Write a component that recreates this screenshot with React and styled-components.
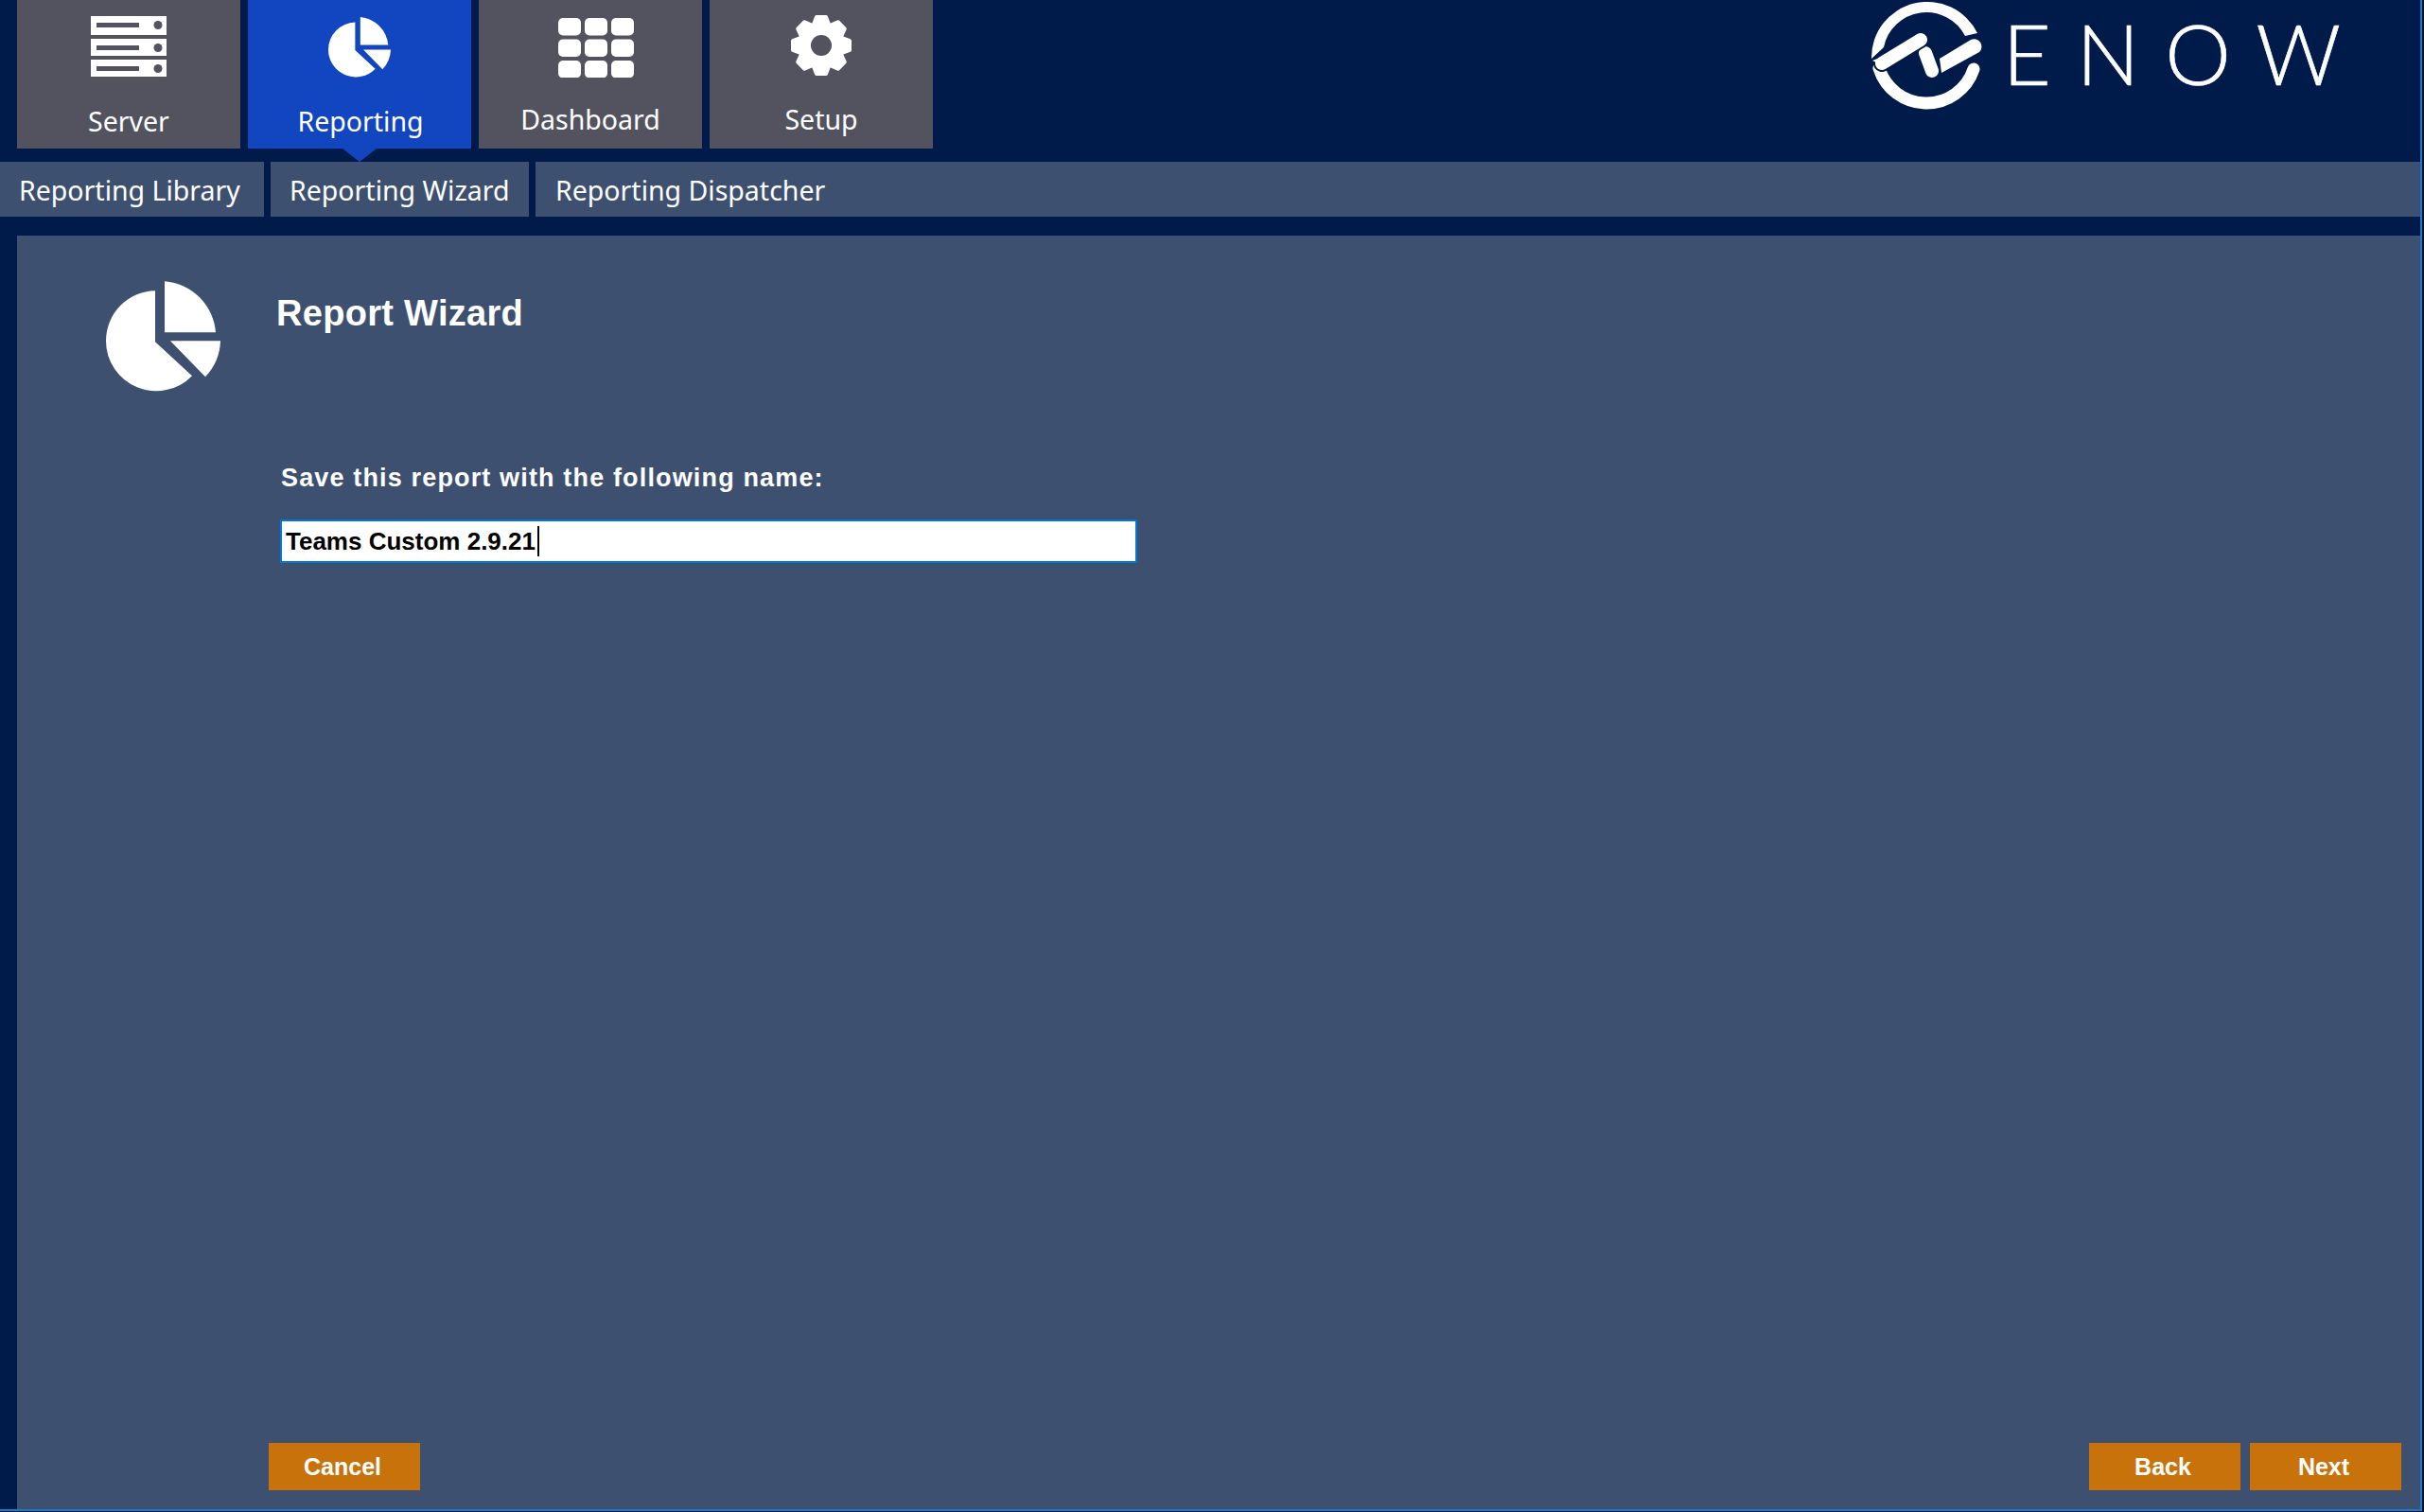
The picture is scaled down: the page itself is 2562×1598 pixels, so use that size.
import React from 'react';
import styled, { createGlobalStyle } from 'styled-components';

const GlobalStyle = createGlobalStyle`
  html, body {
    margin: 0;
    padding: 0;
    background: #0a1220;
  }
`;

const Frame = styled.div`
  width: 2560px;
  height: 1597px;
  box-sizing: border-box;
  background: #001a4a;
  border-right: 2px solid #1a78d2;
  border-bottom: 2px solid #1a78d2;
  display: flex;
  flex-direction: column;
  overflow: hidden;
`;

const Header = styled.header`
  display: flex;
  justify-content: space-between;
  height: 171px;
  padding-left: 18px;
`;

const TabRow = styled.nav`
  display: flex;
  gap: 8px;
  align-items: flex-start;
`;

const MainTab = styled.div`
  position: relative;
  width: 236px;
  height: 157px;
  background: ${(p) => (p.$active ? '#1246c0' : '#53535f')};
  color: #fff;
  display: flex;
  flex-direction: column;
  align-items: center;
  font-family: 'Noto Sans', sans-serif;
  font-size: 28.5px;

  ${(p) =>
    p.$active &&
    `&::after {
      content: '';
      position: absolute;
      left: 50%;
      bottom: -14px;
      margin-left: -18px;
      border-left: 18px solid transparent;
      border-right: 18px solid transparent;
      border-top: 14px solid #1246c0;
    }`}
`;

const TabIcon = styled.div`
  height: 100px;
  box-sizing: border-box;
  display: flex;
  align-items: center;
  justify-content: center;
  padding-left: ${(p) => p.$shift || 0}px;
  padding-bottom: ${(p) => p.$lift || 0}px;
`;

const TabLabel = styled.span`
  line-height: 50px;
  padding-top: ${(p) => p.$drop}px;
  padding-left: ${(p) => (p.$active ? 2 : 0)}px;
`;

const Logo = styled.div`
  display: flex;
  gap: 17px;
  padding-right: 57px;
  align-items: flex-start;
`;

const LogoText = styled.div`
  font-family: 'Lato', sans-serif;
  font-weight: 300;
  font-size: 88px;
  line-height: 113px;
  letter-spacing: 27px;
  color: #fff;
  -webkit-text-stroke: 0.7px #fff;
`;

const SubBar = styled.div`
  display: flex;
  height: 58px;
  gap: 7px;
`;

const SubTab = styled.div`
  background: #3e5070;
  color: #fff;
  font-family: 'Noto Sans', sans-serif;
  font-size: 28.5px;
  line-height: 61px;
  width: ${(p) => p.$width || 'auto'};
  flex: ${(p) => (p.$grow ? 1 : 'none')};
  box-sizing: border-box;
  padding-left: ${(p) => (p.$grow ? 21 : 20)}px;
`;

const Panel = styled.main`
  flex: 1;
  margin: 20px 0 0 18px;
  background: #3e5070;
  display: flex;
  flex-direction: column;
  color: #fff;
  font-family: 'Liberation Sans', Arial, sans-serif;
`;

const PanelHead = styled.div`
  display: flex;
  padding: 48px 0 0 94px;
  gap: 59px;
  height: 170px;
`;

const Title = styled.h1`
  margin: 12px 0 0;
  font-size: 38px;
  font-weight: 700;
  line-height: 44px;
  letter-spacing: 0.3px;
`;

const Form = styled.div`
  flex: 1;
  padding: 22px 0 0 278px;
`;

const Label = styled.div`
  font-size: 27px;
  font-weight: 700;
  line-height: 32px;
  letter-spacing: 1.15px;
  margin: 0 0 28px 1px;
`;

const NameInput = styled.div`
  width: 906px;
  height: 46px;
  box-sizing: border-box;
  border: 2px solid #0078d7;
  background: #fff;
  color: #000;
  font-size: 26px;
  font-weight: 700;
  line-height: 42px;
  padding-left: 4px;
  display: flex;
  align-items: center;
`;

const Caret = styled.span`
  width: 2px;
  height: 32px;
  margin-left: 2px;
  background: #000;
`;

const Footer = styled.footer`
  display: flex;
  justify-content: space-between;
  padding: 0 20px 20px 266px;
`;

const ButtonGroup = styled.div`
  display: flex;
  gap: 10px;
`;

const Button = styled.button`
  width: 160px;
  height: 50px;
  border: none;
  background: #c8720b;
  color: #fff;
  font-family: 'Liberation Sans', Arial, sans-serif;
  font-size: 25px;
  font-weight: 700;
  padding: 0 4px 0 0;
`;

const ServerIcon = () => (
  <svg width="80" height="66" viewBox="0 0 80 66">
    {[0, 24, 46].map((y, i) => (
      <g key={y}>
        <rect x="0" y={y} width="80" height={i === 0 ? 20 : 18} fill="#fff" />
        <rect x="6" y={y + 7} width="45" height="5" fill="#53535f" />
        <circle cx="71" cy={y + 9.5} r="4.5" fill="#53535f" />
      </g>
    ))}
  </svg>
);

const PieIcon = ({ size }) => (
  <svg width={size} height={size * 0.97} viewBox="0 0 121 117">
    <path d="M52 10 V64 L91 100 A53 53 0 0 1 0 63 A53 53 0 0 1 52 10 Z" fill="#fff" />
    <path d="M62 0 A59 59 0 0 1 116 54 H62 Z" fill="#fff" />
    <path d="M68 63 H121 A58 58 0 0 1 105 101 Z" fill="#fff" />
  </svg>
);

const GridIcon = () => (
  <svg width="80" height="63" viewBox="0 0 80 63">
    {[0, 22.5, 45].map((y) =>
      [0, 28, 56].map((x) => (
        <rect key={`${x}-${y}`} x={x} y={y} width="24" height="18.5" rx="5" fill="#fff" />
      ))
    )}
  </svg>
);

const GearIcon = () => (
  <svg width="66" height="66" viewBox="0 0 66 66">
    <g fill="#fff" stroke="#fff" strokeWidth="4" strokeLinejoin="round">
      {[0, 45, 90, 135, 180, 225, 270, 315].map((a) => (
        <polygon key={a} points="23,16 28,3 38,3 43,16" transform={`rotate(${a} 33 33)`} />
      ))}
    </g>
    <circle cx="33" cy="33" r="23" fill="#fff" />
    <circle cx="33" cy="33" r="11" fill="#53535f" />
  </svg>
);

const LogoMark = () => (
  <svg width="130" height="118" viewBox="0 0 130 118">
    <path d="M8 62 A59 59 0 0 1 120 35 L107 38 A46 46 0 0 0 21 50 Z" fill="#fff" />
    <g fill="none" strokeLinecap="round">
      <path d="M16 72 A52.5 52.5 0 0 0 116 73" stroke="#fff" strokeWidth="13" />
      <path d="M65 56 L72 75" stroke="#fff" strokeWidth="14" />
      <path d="M19 67 L60 42" stroke="#001a4a" strokeWidth="18" />
      <path d="M19 67 L60 42" stroke="#fff" strokeWidth="14" />
    </g>
    <path d="M9 64 L20 60 L25 72 Z" fill="#fff" />
    <path d="M80 62 L113 42 A8 8 0 0 1 122 55 L82 77 Z" fill="#fff" />
  </svg>
);

const tabs = [
  { label: 'Server', icon: <ServerIcon />, drop: 3 },
  { label: 'Reporting', icon: <PieIcon size={66} />, active: true, drop: 3 },
  { label: 'Dashboard', icon: <GridIcon />, shift: 12, drop: 1 },
  { label: 'Setup', icon: <GearIcon />, lift: 4, drop: 1 },
];

export default function App() {
  return (
    <>
      <GlobalStyle />
      <Frame>
        <Header>
          <TabRow>
            {tabs.map((t) => (
              <MainTab key={t.label} $active={t.active}>
                <TabIcon $shift={t.shift} $lift={t.lift}>{t.icon}</TabIcon>
                <TabLabel $drop={t.drop} $active={t.active}>{t.label}</TabLabel>
              </MainTab>
            ))}
          </TabRow>
          <Logo>
            <LogoMark />
            <LogoText>ENOW</LogoText>
          </Logo>
        </Header>
        <SubBar>
          <SubTab $width="279px">Reporting Library</SubTab>
          <SubTab $width="273px">Reporting Wizard</SubTab>
          <SubTab $grow>Reporting Dispatcher</SubTab>
        </SubBar>
        <Panel>
          <PanelHead>
            <PieIcon size={121} />
            <Title>Report Wizard</Title>
          </PanelHead>
          <Form>
            <Label>Save this report with the following name:</Label>
            <NameInput>
              Teams Custom 2.9.21
              <Caret />
            </NameInput>
          </Form>
          <Footer>
            <Button>Cancel</Button>
            <ButtonGroup>
              <Button>Back</Button>
              <Button>Next</Button>
            </ButtonGroup>
          </Footer>
        </Panel>
      </Frame>
    </>
  );
}
